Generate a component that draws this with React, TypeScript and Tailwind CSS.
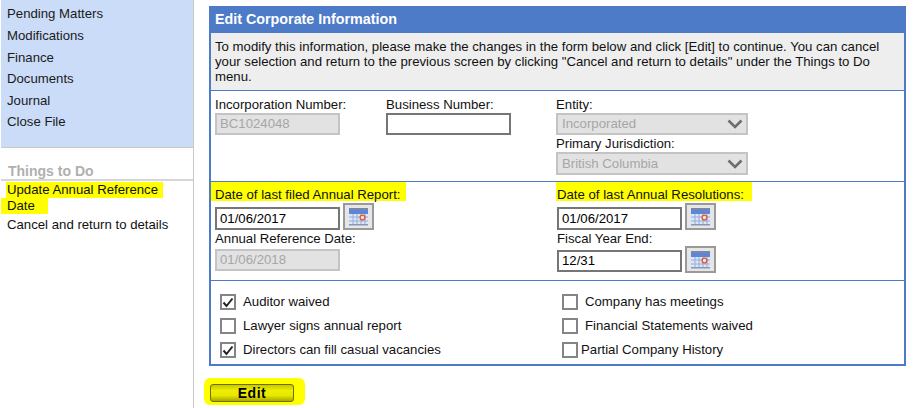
const Cal = () => (
  <button className="flex h-[27px] w-[31px] shrink-0 items-center justify-center border-2 border-[#999999] bg-[#e6e6e6]">
    <svg width="21" height="19" viewBox="0 0 21 19">
      <rect x="0" y="2" width="21" height="17" fill="#dfe6f3" />
      <rect x="1" y="1" width="19" height="2" fill="#7a88a3" />
      <rect x="1" y="3" width="19" height="4" fill="#5f86d6" />
      <path d="M5 7v10M9 7v10M13 7v10M17 7v10M1 10h19M1 14h19" stroke="#93acdf" strokeWidth="1" />
      <circle cx="14.5" cy="10.5" r="2.4" fill="#f4e8e0" stroke="#e2562e" strokeWidth="1.4" />
      <rect x="1" y="17" width="19" height="1.5" fill="#8a97b0" />
    </svg>
  </button>
);

const Field = ({ value = "", disabled = false, h = "h-[22px]" }: { value?: string; disabled?: boolean; h?: string }) => (
  <div
    className={`flex w-[125px] items-center px-[3px] ${h} ${
      disabled ? "border-2 border-[#c4c4c4] bg-[#e2e2e2] text-[#a6a6a6]" : "border-2 border-[#767676] bg-white text-black"
    }`}
  >
    {value}
  </div>
);

const Select = ({ value, h }: { value: string; h: string }) => (
  <div className={`flex w-[192px] items-center justify-between border-2 border-[#c4c4c4] bg-[#e2e2e2] pl-[4px] pr-[3px] text-[#a6a6a6] ${h}`}>
    <span>{value}</span>
    <svg width="16" height="10" viewBox="0 0 16 10" fill="none">
      <path d="M1.5 1.5 8 8l6.5-6.5" stroke="#6d6d6d" strokeWidth="2.6" />
    </svg>
  </div>
);

const Check = ({ checked = false }: { checked?: boolean }) => (
  <span className="flex h-[16px] w-[16px] shrink-0 items-center justify-center border-2 border-[#858585] bg-white">
    {checked && (
      <svg width="12" height="11" viewBox="0 0 12 11" fill="none">
        <path d="M1.5 5.5 4.5 9 10.5 1.5" stroke="#222" strokeWidth="2" />
      </svg>
    )}
  </span>
);

const CheckRow = ({ label, checked, gap = "gap-[7px]" }: { label: string; checked?: boolean; gap?: string }) => (
  <div className={`flex h-[24px] items-center ${gap}`}>
    <Check checked={checked} />
    <span>{label}</span>
  </div>
);

const Mark = ({ children, x = "ml-[-4px] pl-[4px] pr-[6px]" }: { children: string; x?: string }) => (
  <div className={`mb-[2px] w-fit bg-[#ffff00] pb-0 pt-[6px] leading-[13px] ${x}`}>{children}</div>
);

const Label = ({ children, h = "h-[17px]" }: { children: string; h?: string }) => <div className={`leading-[17px] ${h}`}>{children}</div>;

export default function App() {
  return (
    <div className="flex h-[408px] w-[921px] overflow-hidden bg-white font-['Liberation_Sans',Arial,sans-serif] text-[13.2px] text-[#111]">
      <aside className="w-[194px] shrink-0 border-r border-[#c9c9c9] pl-px">
        <nav className="flex h-[148px] flex-col border-b border-[#c8c8c8] bg-[#cbdcf8] pl-[6px] pt-[3.4px] text-[#1a1a1a]">
          {["Pending Matters", "Modifications", "Finance", "Documents", "Journal", "Close File"].map((t) => (
            <div key={t} className="h-[21.6px] leading-[21px]">{t}</div>
          ))}
        </nav>
        <div className="mt-[15px] h-[18px] border-b-2 border-[#d6d6d6] pl-[7px] text-[14px] font-bold leading-[16px] text-[#b0b0b0]">Things to Do</div>
        <div className="mt-[1px] leading-[16px]">
          <div className="ml-[5px] w-fit bg-[#ffff00] pl-[1px] pr-[5px]">Update Annual Reference</div>
          <div className="w-fit bg-[#ffff00] pl-[6px] pr-[13px]">Date</div>
          <div className="ml-[6px] mt-[3px]">Cancel and return to details</div>
        </div>
      </aside>

      <main className="w-[727px] pl-[15px] pr-[15px] pt-[6px]">
        <section className="w-[697px] border-2 border-t-0 border-[#4d7bc7]">
          <h2 className="flex h-[27px] items-center bg-[#4d7bc7] pl-[4px] text-[14.3px] font-bold text-white">Edit Corporate Information</h2>
          <p className="h-[58px] border-b border-[#4d7bc7] bg-[#eeeeee] px-[4px] pt-[6px] leading-[15px]">
            To modify this information, please make the changes in the form below and click [Edit] to continue. You can cancel your selection and return to the previous screen by clicking "Cancel and return to details" under the Things to Do menu.
          </p>
          <div className="grid h-[91px] grid-cols-[171px_170px_1fr] border-b border-[#4d7bc7] pl-[4px] pt-[5px]">
            <div>
              <Label>Incorporation Number:</Label>
              <Field value="BC1024048" disabled />
            </div>
            <div>
              <Label>Business Number:</Label>
              <Field />
            </div>
            <div>
              <Label>Entity:</Label>
              <Select value="Incorporated" h="h-[22px]" />
              <Label>Primary Jurisdiction:</Label>
              <Select value="British Columbia" h="h-[23px]" />
            </div>
          </div>
          <div className="grid h-[99px] grid-cols-[342px_1fr] border-b border-[#4d7bc7] pl-[4px]">
            <div>
              <Mark>Date of last filed Annual Report:</Mark>
              <div className="flex items-end gap-[3px]">
                <Field value="01/06/2017" h="h-[23px]" />
                <Cal />
              </div>
              <Label h="h-[19px]">Annual Reference Date:</Label>
              <Field value="01/06/2018" disabled />
            </div>
            <div>
              <Mark x="ml-[-1px] pl-[1px] pr-[8px]">Date of last Annual Resolutions:</Mark>
              <div className="flex items-end gap-[3px]">
                <Field value="01/06/2017" h="h-[23px]" />
                <Cal />
              </div>
              <Label h="h-[16px]">Fiscal Year End:</Label>
              <div className="flex items-end gap-[3px]">
                <div className="pb-px">
                  <Field value="12/31" />
                </div>
                <Cal />
              </div>
            </div>
          </div>
          <div className="grid h-[83px] grid-cols-[342px_1fr] pl-[9px] pt-[9px]">
            <div>
              <CheckRow label="Auditor waived" checked />
              <CheckRow label="Lawyer signs annual report" />
              <CheckRow label="Directors can fill casual vacancies" checked />
            </div>
            <div>
              <CheckRow label="Company has meetings" />
              <CheckRow label="Financial Statements waived" />
              <CheckRow label="Partial Company History" gap="gap-[3px]" />
            </div>
          </div>
        </section>
        <div className="ml-[-5px] mt-[12px] w-fit rounded-[6px] bg-[#ffff00] pb-[3px] pl-[6px] pr-[11px] pt-[6px]">
          <button className="flex h-[18px] w-[84px] items-center justify-center rounded-[3px] border border-[#6e6e00] bg-[linear-gradient(#c8c800,#eeee00_35%,#e8e800_65%,#a8a800)] text-[14px] font-bold tracking-[0.5px] text-black">
            Edit
          </button>
        </div>
      </main>
    </div>
  );
}
